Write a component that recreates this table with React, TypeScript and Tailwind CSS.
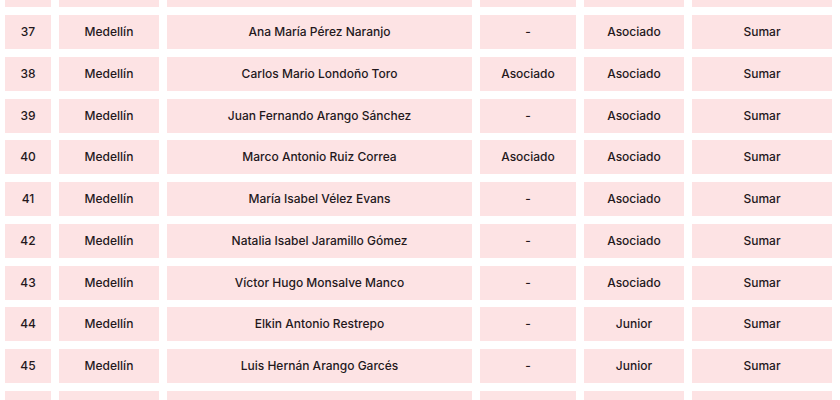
const rows = [
  { n: 36, city: "", name: "", a: "", b: "", act: "" },
  { n: 37, city: "Medellín", name: "Ana María Pérez Naranjo", a: "-", b: "Asociado", act: "Sumar" },
  { n: 38, city: "Medellín", name: "Carlos Mario Londoño Toro", a: "Asociado", b: "Asociado", act: "Sumar" },
  { n: 39, city: "Medellín", name: "Juan Fernando Arango Sánchez", a: "-", b: "Asociado", act: "Sumar" },
  { n: 40, city: "Medellín", name: "Marco Antonio Ruiz Correa", a: "Asociado", b: "Asociado", act: "Sumar" },
  { n: 41, city: "Medellín", name: "María Isabel Vélez Evans", a: "-", b: "Asociado", act: "Sumar" },
  { n: 42, city: "Medellín", name: "Natalia Isabel Jaramillo Gómez", a: "-", b: "Asociado", act: "Sumar" },
  { n: 43, city: "Medellín", name: "Víctor Hugo Monsalve Manco", a: "-", b: "Asociado", act: "Sumar" },
  { n: 44, city: "Medellín", name: "Elkin Antonio Restrepo", a: "-", b: "Junior", act: "Sumar" },
  { n: 45, city: "Medellín", name: "Luis Hernán Arango Garcés", a: "-", b: "Junior", act: "Sumar" },
  { n: 46, city: "", name: "", a: "", b: "", act: "" },
];

const cell = "h-[34px] flex items-center justify-center bg-[#fde3e4]";

export default function App() {
  return (
    <div className="w-[840px] h-[400px] overflow-hidden bg-white font-['Inter',sans-serif] text-[12px] font-medium text-[#24181c]">
      {/* Table grid, scrolled so row 37 is near the top */}
      <div className="-mt-[26.75px] pl-[5px] pr-[8px] grid grid-cols-[46px_100px_305px_96px_100px_1fr] gap-x-[8px] gap-y-[7.75px]">
        {rows.map((r) => (
          <div key={r.n} className="contents">
            <div className={`${cell} bg-[#fdd0d4]`}>{r.city ? r.n : ""}</div>
            <div className={cell}>{r.city}</div>
            <div className={cell}>{r.name}</div>
            <div className={cell}>{r.a}</div>
            <div className={cell}>{r.b}</div>
            <div className={cell}>{r.act}</div>
          </div>
        ))}
      </div>
    </div>
  );
}
